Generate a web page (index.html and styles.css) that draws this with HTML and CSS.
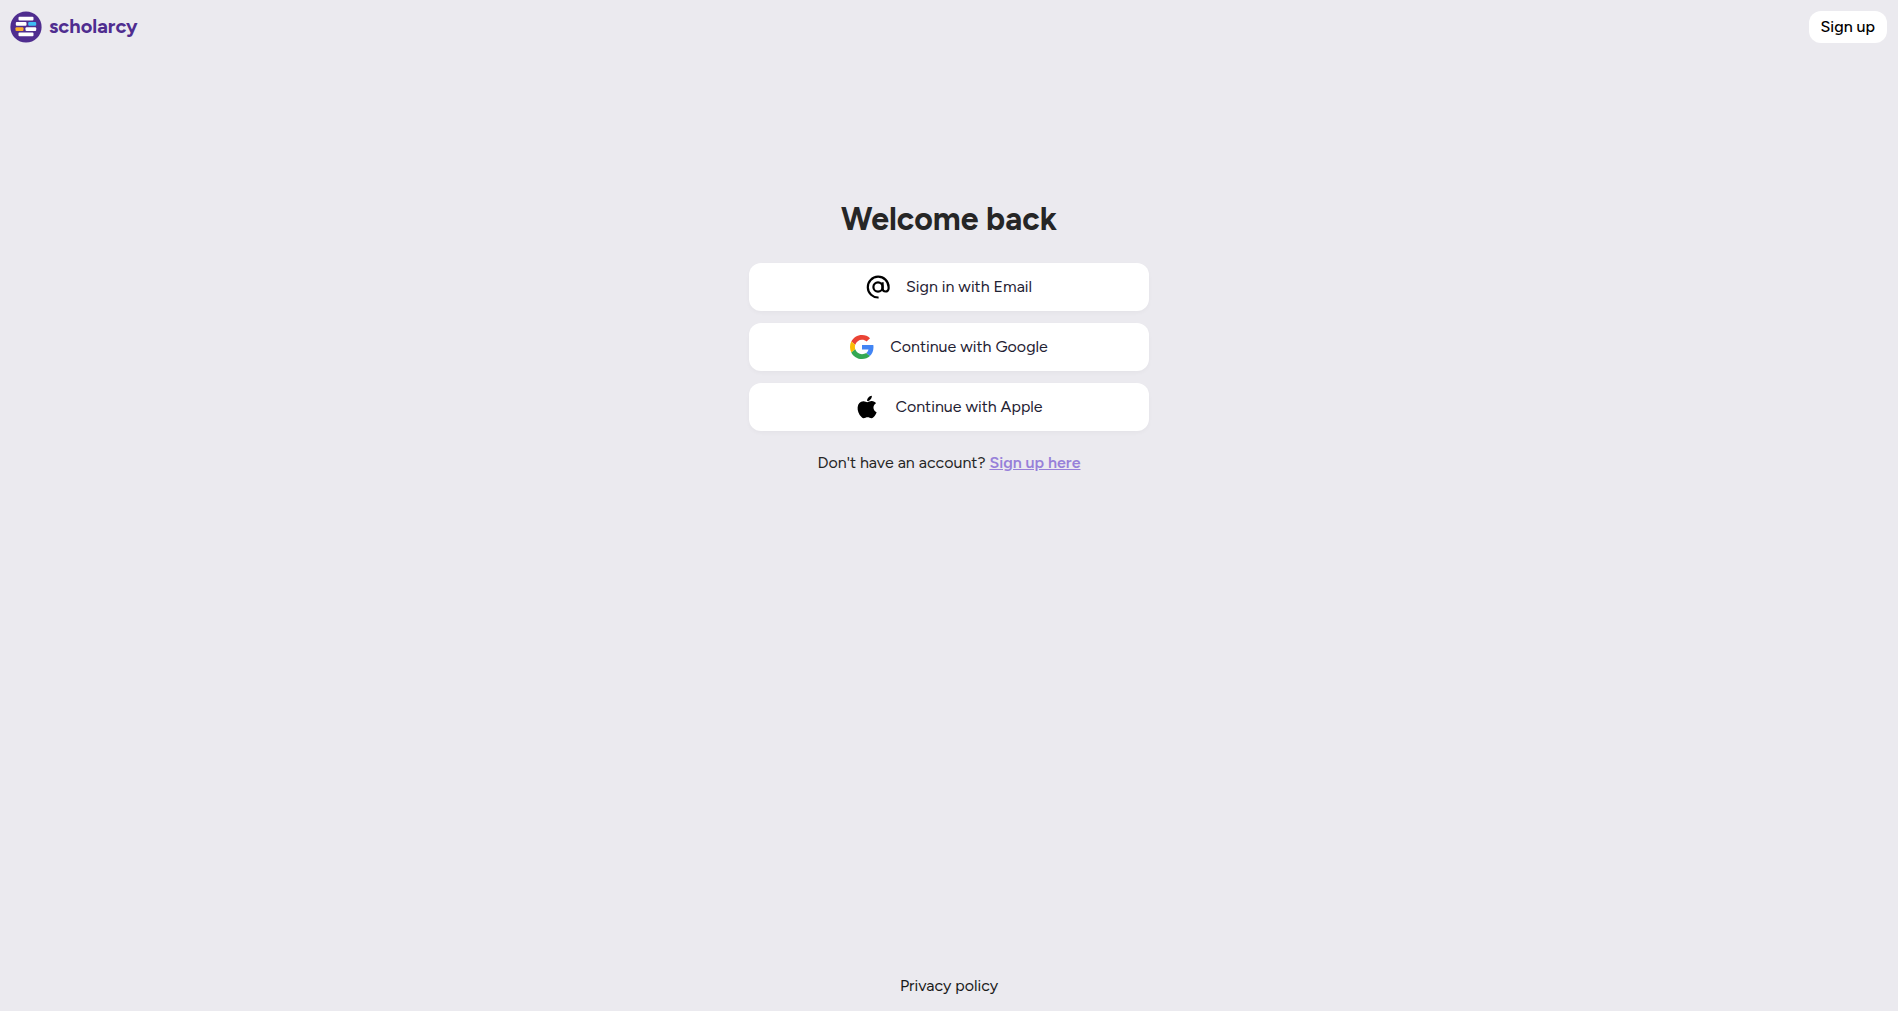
FILE: index.html
```
<!DOCTYPE html>
<html lang="en">
<head>
    <meta charset="UTF-8">
    <meta name="viewport" content="width=device-width, initial-scale=1.0">
    <title>Sign in - Scholarcy</title>
    <link rel="stylesheet" href="styles.css">
</head>
<body>

    <header class="header">
        <a class="logo" href="#">
            <svg class="logo-mark" viewBox="0 0 32 32" aria-hidden="true">
                <circle cx="16" cy="16" r="15.6" fill="#4f2d8f"/>
                <g fill="#fff">
                    <rect x="8.5" y="5.8" width="15" height="3.7" rx="1"/>
                    <rect x="5.8" y="11" width="10.7" height="3.7" rx="1"/>
                    <rect x="15.5" y="16.3" width="10.7" height="3.7" rx="1"/>
                    <rect x="8.5" y="21.5" width="15" height="3.7" rx="1"/>
                </g>
                <rect x="18.2" y="11" width="8" height="3.7" rx="1" fill="#3fbdf5"/>
                <rect x="5.5" y="16.3" width="8" height="3.7" rx="1" fill="#fbb02d"/>
            </svg>
            <span class="logo-text">scholarcy</span>
        </a>
        <button type="button" class="signup-btn">Sign up</button>
    </header>

    <main class="main">
        <h1 class="title">Welcome back</h1>

        <div class="providers">
            <button type="button" class="provider-btn">
                <svg class="provider-icon" viewBox="0 0 24 24" aria-hidden="true">
                    <g fill="none" stroke="#000" stroke-width="2.2">
                        <circle cx="12" cy="12" r="4.6"/>
                        <path d="M16.6 7.2v6.3a3 3 0 0 0 6 0V12A10.4 10.4 0 1 0 12.6 22.5"/>
                    </g>
                </svg>
                Sign in with Email
            </button>
            <button type="button" class="provider-btn">
                <svg class="provider-icon" viewBox="0 0 48 48" aria-hidden="true">
                    <path fill="#ea4335" d="M24 9.5c3.54 0 6.71 1.22 9.21 3.6l6.85-6.85C35.9 2.38 30.47 0 24 0 14.62 0 6.51 5.38 2.56 13.22l7.98 6.19C12.43 13.72 17.74 9.5 24 9.5z"/>
                    <path fill="#4285f4" d="M46.98 24.55c0-1.57-.15-3.09-.38-4.55H24v9.02h12.94c-.58 2.96-2.26 5.48-4.78 7.18l7.73 6c4.51-4.18 7.09-10.36 7.09-17.65z"/>
                    <path fill="#fbbc05" d="M10.53 28.59c-.48-1.45-.76-2.99-.76-4.59s.27-3.14.76-4.59l-7.98-6.19C.92 16.46 0 20.12 0 24c0 3.88.92 7.54 2.56 10.78l7.97-6.19z"/>
                    <path fill="#34a853" d="M24 48c6.48 0 11.93-2.13 15.89-5.81l-7.73-6c-2.15 1.45-4.92 2.3-8.16 2.3-6.26 0-11.57-4.22-13.47-9.91l-7.98 6.19C6.51 42.62 14.62 48 24 48z"/>
                </svg>
                Continue with Google
            </button>
            <button type="button" class="provider-btn">
                <svg class="provider-icon" viewBox="2.3 2.4 19.2 19.2" aria-hidden="true">
                    <path d="M17.05 20.28c-.98.95-2.05.8-3.08.35-1.09-.46-2.09-.48-3.24 0-1.44.62-2.2.44-3.06-.35C2.79 15.25 3.51 7.59 9.05 7.31c1.35.07 2.29.74 3.08.8 1.18-.24 2.31-.93 3.57-.84 1.51.12 2.65.72 3.4 1.8-3.12 1.87-2.38 5.98.48 7.13-.57 1.5-1.31 2.99-2.54 4.09zM12.03 7.25c-.15-2.23 1.66-4.07 3.74-4.25.29 2.58-2.34 4.5-3.74 4.25z"/>
                </svg>
                Continue with Apple
            </button>
        </div>

        <p class="signup-text">Don't have an account? <a class="signup-link" href="#">Sign up here</a></p>
    </main>

    <footer class="footer">
        <a class="footer-link" href="#">Privacy policy</a>
    </footer>

</body>
</html>
```
FILE: styles.css
```
* {
    box-sizing: border-box;
}
body {
    margin: 0;
    min-height: 100vh;
    display: flex;
    flex-direction: column;
    background-color: #ebeaef;
    color: #262626;
    font-family: Figtree, Lato, sans-serif;
    font-size: 16px;
    line-height: 24px;
}
button {
    font: inherit;
    border: none;
    cursor: pointer;
}
.header {
    display: flex;
    align-items: center;
    justify-content: space-between;
    padding: 11px 11px 11px 10px;
}
.logo {
    display: flex;
    align-items: center;
    gap: 7px;
    color: #4f2d8f;
    text-decoration: none;
}
.logo-mark {
    width: 32px;
    height: 32px;
}
.logo-text {
    padding-bottom: 2px;
    font-size: 20px;
    font-weight: bold;
}
.signup-btn {
    height: 32px;
    padding: 0 12px;
    border-radius: 12px;
    background-color: #fff;
    color: #000;
    font-weight: 500;
}
.main {
    flex: 1;
    display: flex;
    flex-direction: column;
    align-items: center;
    padding: 145px 16px 0;
}
.title {
    margin: 0 0 24px;
    font-size: 32px;
    line-height: 40px;
    font-weight: bold;
}
.providers {
    width: 100%;
    max-width: 400px;
    display: flex;
    flex-direction: column;
    gap: 12px;
}
.provider-btn {
    display: flex;
    align-items: center;
    justify-content: center;
    gap: 16px;
    padding: 12px;
    border-radius: 12px;
    background-color: #fff;
    color: #1f2233;
    box-shadow: 0 2px 4px rgba(0, 0, 0, 0.03);
}
.provider-icon {
    width: 24px;
    height: 24px;
    fill: #000;
}
.signup-text {
    margin: 20px 0;
}
.signup-link {
    color: #9780d9;
    font-weight: 600;
}
.footer {
    padding: 13px;
    text-align: center;
}
.footer-link {
    color: #1a1a1a;
    text-decoration: none;
}
```
